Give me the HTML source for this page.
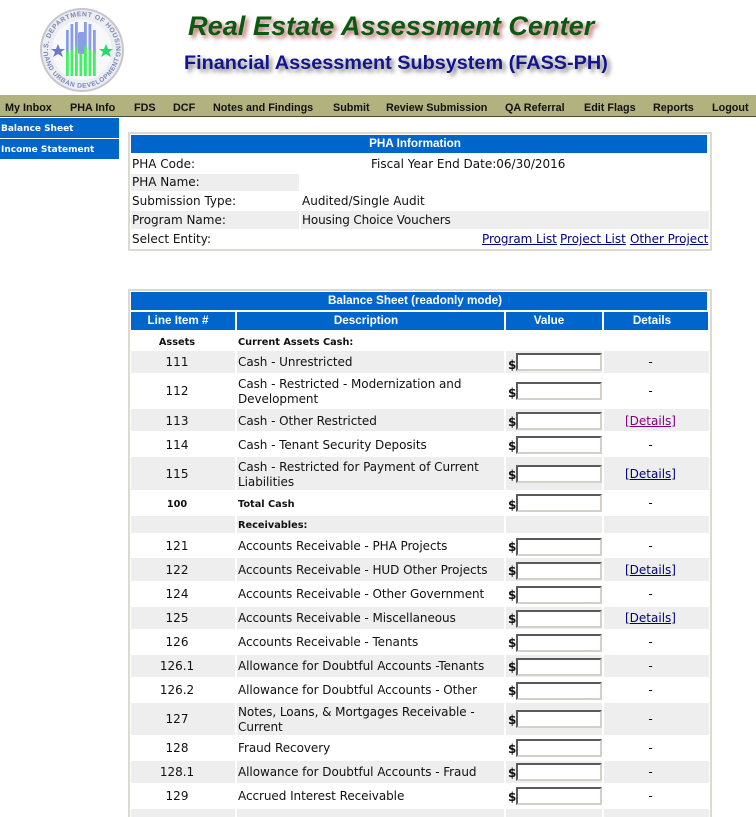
<!DOCTYPE html>
<html><head><meta charset="utf-8"><title>FASS-PH</title>
<style>
html,body{margin:0;padding:0;background:#fff;width:756px;height:817px;overflow:hidden}
body{position:relative;font:12px/15px "DejaVu Sans",Verdana,sans-serif;color:#111}
div,a,span{position:absolute;white-space:nowrap}
a{color:#00007f;text-decoration:underline}
.t1{left:188px;top:8px;font:italic bold 27.15px/36px "Liberation Sans",sans-serif;color:#0a5a12;text-shadow:3px 3px 4px rgba(160,50,50,.7)}
.t2{left:184px;top:49px;font:bold 19.85px/28px "Liberation Sans",sans-serif;color:#14148c;text-shadow:3px 3px 4px rgba(70,70,70,.7)}
#nav{left:0;top:95px;width:756px;height:21px;background:#b2b27f;border-bottom:1px solid #4a4a3a}
#nav span{top:6px;font:bold 10.8px/14px "Liberation Sans",sans-serif;color:#111}
.side{left:0;height:20px;background:#0066cc;color:#fff;font:bold 9px/22px "DejaVu Sans",sans-serif;padding-left:1px;width:118px;overflow:hidden}
.box{left:128px;width:580px;border:2px solid #dcd9d2;background:#fff}
.hd{background:#0066cc;color:#fff;font:bold 11.7px/18px "Liberation Sans",sans-serif;text-align:center;height:18px;overflow:hidden}
.hd i{font-style:normal;position:absolute;top:0;transform:translateX(-50%)}
.g{background:#eeeeee}
.i{left:516px;width:82px;height:14px;background:#fff;border:2px solid;border-color:#5a5a5a #d4d0c8 #d4d0c8 #5a5a5a}
.d{left:508px;font:bold 12px/16px "DejaVu Sans",sans-serif;color:#111}
.n{left:131px;width:92px;text-align:center}
.x{left:238px;letter-spacing:-.06px}
.b{font-weight:bold;font-size:9.75px;letter-spacing:0}
.m{left:604px;width:93px;text-align:center}
</style></head><body>
<svg style="position:absolute;left:38px;top:6px;filter:blur(.35px)" width="90" height="88" viewBox="0 0 90 88">
<defs><path id="a1" d="M10.5 50 A34 34 0 1 1 77.5 50"/><path id="a2" d="M6.7 51 A38 38 0 0 0 81.3 51"/></defs>
<circle cx="44" cy="44" r="41" fill="#eceef2" stroke="#c6c6cc" stroke-width="2"/>
<circle cx="44" cy="44" r="30" fill="#f8f8fb"/>
<text font-family="Liberation Sans" font-size="6.8" font-weight="bold" fill="#7a88b8"><textPath href="#a1" textLength="119" lengthAdjust="spacing">U.S. DEPARTMENT OF HOUSING</textPath></text>
<text font-family="Liberation Sans" font-size="6.6" font-weight="bold" fill="#7a88b8"><textPath href="#a2" textLength="103" lengthAdjust="spacing">AND URBAN DEVELOPMENT</textPath></text>
<g fill="#8a9ee8"><rect x="28" y="24" width="2.8" height="24"/><rect x="32.5" y="18" width="2.8" height="28"/><rect x="37" y="16" width="2.8" height="28"/><rect x="46" y="16" width="2.8" height="28"/><rect x="50.5" y="18" width="2.8" height="28"/><rect x="55" y="24" width="2.8" height="24"/><rect x="40" y="26" width="7" height="22" rx="2"/></g>
<g fill="#44ee66"><rect x="28" y="46" width="2.8" height="24"/><rect x="32.5" y="44" width="2.8" height="26"/><rect x="37" y="40" width="2.8" height="30"/><rect x="41.5" y="48" width="2.8" height="22"/><rect x="46" y="40" width="2.8" height="30"/><rect x="50.5" y="44" width="2.8" height="26"/><rect x="55" y="46" width="2.8" height="24"/></g>
<polygon points="20,38 22,43 27,43 23,46 25,51 20,48 15,51 17,46 13,43 18,43" fill="#6c78cc"/>
<polygon points="68,38 70,43 75,43 71,46 73,51 68,48 63,51 65,46 61,43 66,43" fill="#22dd66"/>
</svg>
<div class="t1">Real Estate Assessment Center</div>
<div class="t2">Financial Assessment Subsystem (FASS-PH)</div>
<div id="nav">
<span style="left:5px">My Inbox</span><span style="left:70px">PHA Info</span><span style="left:134px">FDS</span><span style="left:173px">DCF</span><span style="left:213px">Notes and Findings</span><span style="left:333px">Submit</span><span style="left:386px">Review Submission</span><span style="left:505px">QA Referral</span><span style="left:584px">Edit Flags</span><span style="left:653px">Reports</span><span style="left:712px">Logout</span>
</div>
<div class="side" style="top:118px">Balance Sheet</div>
<div class="side" style="top:139px">Income Statement</div>

<div class="box" style="top:132px;height:115px"></div>
<div class="hd" style="left:131px;top:135px;width:576px"><i style="left:284px">PHA Information</i></div>
<div style="left:132px;top:157px">PHA Code:</div>
<div style="left:371px;top:157px">Fiscal Year End Date:06/30/2016</div>
<div class="g" style="left:131px;top:174px;width:168px;height:17px"></div>
<div style="left:132px;top:175px">PHA Name:</div>
<div style="left:132px;top:194px">Submission Type:</div>
<div style="left:302px;top:194px">Audited/Single Audit</div>
<div class="g" style="left:131px;top:211px;width:168px;height:18px"></div>
<div class="g" style="left:301px;top:211px;width:408px;height:18px"></div>
<div style="left:132px;top:213px">Program Name:</div>
<div style="left:302px;top:213px;letter-spacing:-.15px">Housing Choice Vouchers</div>
<div style="left:132px;top:232px">Select Entity:</div>
<a style="left:482px;top:232px;letter-spacing:-.05px">Program List</a><a style="left:560px;top:232px">Project List</a><a style="left:630px;top:232px;letter-spacing:-.05px">Other Project</a>

<div class="box" style="top:289px;height:540px"></div>
<div class="hd" style="left:131px;top:292px;width:576px"><i style="left:284px">Balance Sheet (readonly mode)</i></div>
<div class="hd" style="left:131px;top:312px;width:104px"><i style="left:47px">Line Item #</i></div>
<div class="hd" style="left:237px;top:312px;width:267px"><i style="left:129px">Description</i></div>
<div class="hd" style="left:506px;top:312px;width:96px"><i style="left:43px">Value</i></div>
<div class="hd" style="left:604px;top:312px;width:104px"><i style="left:48px">Details</i></div>

<div class="g" style="left:131px;top:351px;width:104px;height:22px"></div><div class="g" style="left:237px;top:351px;width:267px;height:22px"></div><div class="g" style="left:506px;top:351px;width:96px;height:22px"></div><div class="g" style="left:604px;top:351px;width:105px;height:22px"></div>
<div class="g" style="left:131px;top:409px;width:104px;height:22px"></div><div class="g" style="left:237px;top:409px;width:267px;height:22px"></div><div class="g" style="left:506px;top:409px;width:96px;height:22px"></div><div class="g" style="left:604px;top:409px;width:105px;height:22px"></div>
<div class="g" style="left:131px;top:457px;width:104px;height:33px"></div><div class="g" style="left:237px;top:457px;width:267px;height:33px"></div><div class="g" style="left:506px;top:457px;width:96px;height:33px"></div><div class="g" style="left:604px;top:457px;width:105px;height:33px"></div>
<div class="g" style="left:131px;top:516px;width:104px;height:17px"></div><div class="g" style="left:237px;top:516px;width:267px;height:17px"></div><div class="g" style="left:506px;top:516px;width:96px;height:17px"></div><div class="g" style="left:604px;top:516px;width:105px;height:17px"></div>
<div class="g" style="left:131px;top:558px;width:104px;height:23px"></div><div class="g" style="left:237px;top:558px;width:267px;height:23px"></div><div class="g" style="left:506px;top:558px;width:96px;height:23px"></div><div class="g" style="left:604px;top:558px;width:105px;height:23px"></div>
<div class="g" style="left:131px;top:607px;width:104px;height:22px"></div><div class="g" style="left:237px;top:607px;width:267px;height:22px"></div><div class="g" style="left:506px;top:607px;width:96px;height:22px"></div><div class="g" style="left:604px;top:607px;width:105px;height:22px"></div>
<div class="g" style="left:131px;top:655px;width:104px;height:22px"></div><div class="g" style="left:237px;top:655px;width:267px;height:22px"></div><div class="g" style="left:506px;top:655px;width:96px;height:22px"></div><div class="g" style="left:604px;top:655px;width:105px;height:22px"></div>
<div class="g" style="left:131px;top:703px;width:104px;height:32px"></div><div class="g" style="left:237px;top:703px;width:267px;height:32px"></div><div class="g" style="left:506px;top:703px;width:96px;height:32px"></div><div class="g" style="left:604px;top:703px;width:105px;height:32px"></div>
<div class="g" style="left:131px;top:761px;width:104px;height:22px"></div><div class="g" style="left:237px;top:761px;width:267px;height:22px"></div><div class="g" style="left:506px;top:761px;width:96px;height:22px"></div><div class="g" style="left:604px;top:761px;width:105px;height:22px"></div>
<div class="g" style="left:131px;top:809px;width:104px;height:8px"></div><div class="g" style="left:237px;top:809px;width:267px;height:8px"></div><div class="g" style="left:506px;top:809px;width:96px;height:8px"></div><div class="g" style="left:604px;top:809px;width:105px;height:8px"></div>

<div class="n b" style="top:335px">Assets</div><div class="x b" style="top:335px">Current Assets Cash:</div>
<div class="n" style="top:355px">111</div><div class="x" style="top:355px">Cash - Unrestricted</div><div class="d" style="top:357px">$</div><div class="i" style="top:353px"></div><div class="m" style="top:355px">-</div>
<div class="n" style="top:384px">112</div><div class="x" style="top:377px">Cash - Restricted - Modernization and<br>Development</div><div class="d" style="top:385px">$</div><div class="i" style="top:382px"></div><div class="m" style="top:384px">-</div>
<div class="n" style="top:414px">113</div><div class="x" style="top:414px">Cash - Other Restricted</div><div class="d" style="top:414px">$</div><div class="i" style="top:412px"></div><a style="top:414px;left:625px;color:#800080">[Details]</a>
<div class="n" style="top:438px">114</div><div class="x" style="top:438px">Cash - Tenant Security Deposits</div><div class="d" style="top:438px">$</div><div class="i" style="top:436px"></div><div class="m" style="top:438px">-</div>
<div class="n" style="top:467px">115</div><div class="x" style="top:460px">Cash - Restricted for Payment of Current<br>Liabilities</div><div class="d" style="top:467px">$</div><div class="i" style="top:465px"></div><a style="top:467px;left:625px">[Details]</a>
<div class="n b" style="top:497px">100</div><div class="x b" style="top:497px">Total Cash</div><div class="d" style="top:497px">$</div><div class="i" style="top:494px"></div><div class="m" style="top:496px">-</div>
<div class="x b" style="top:518px">Receivables:</div>
<div class="n" style="top:539px">121</div><div class="x" style="top:539px">Accounts Receivable - PHA Projects</div><div class="d" style="top:539px">$</div><div class="i" style="top:538px"></div><div class="m" style="top:539px">-</div>
<div class="n" style="top:563px">122</div><div class="x" style="top:563px">Accounts Receivable - HUD Other Projects</div><div class="d" style="top:563px">$</div><div class="i" style="top:562px"></div><a style="top:563px;left:625px">[Details]</a>
<div class="n" style="top:587px">124</div><div class="x" style="top:587px">Accounts Receivable - Other Government</div><div class="d" style="top:587px">$</div><div class="i" style="top:586px"></div><div class="m" style="top:587px">-</div>
<div class="n" style="top:611px">125</div><div class="x" style="top:611px">Accounts Receivable - Miscellaneous</div><div class="d" style="top:611px">$</div><div class="i" style="top:610px"></div><a style="top:611px;left:625px">[Details]</a>
<div class="n" style="top:635px">126</div><div class="x" style="top:635px">Accounts Receivable - Tenants</div><div class="d" style="top:635px">$</div><div class="i" style="top:634px"></div><div class="m" style="top:635px">-</div>
<div class="n" style="top:659px">126.1</div><div class="x" style="top:659px">Allowance for Doubtful Accounts -Tenants</div><div class="d" style="top:659px">$</div><div class="i" style="top:658px"></div><div class="m" style="top:659px">-</div>
<div class="n" style="top:683px">126.2</div><div class="x" style="top:683px">Allowance for Doubtful Accounts - Other</div><div class="d" style="top:683px">$</div><div class="i" style="top:682px"></div><div class="m" style="top:683px">-</div>
<div class="n" style="top:712px">127</div><div class="x" style="top:705px">Notes, Loans, &amp; Mortgages Receivable -<br>Current</div><div class="d" style="top:712px">$</div><div class="i" style="top:710px"></div><div class="m" style="top:712px">-</div>
<div class="n" style="top:741px">128</div><div class="x" style="top:741px">Fraud Recovery</div><div class="d" style="top:741px">$</div><div class="i" style="top:739px"></div><div class="m" style="top:741px">-</div>
<div class="n" style="top:765px">128.1</div><div class="x" style="top:765px">Allowance for Doubtful Accounts - Fraud</div><div class="d" style="top:765px">$</div><div class="i" style="top:763px"></div><div class="m" style="top:765px">-</div>
<div class="n" style="top:789px">129</div><div class="x" style="top:789px">Accrued Interest Receivable</div><div class="d" style="top:789px">$</div><div class="i" style="top:787px"></div><div class="m" style="top:789px">-</div>
</body></html>
